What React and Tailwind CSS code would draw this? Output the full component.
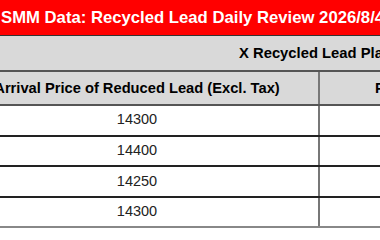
const rows = ['14300', '14400', '14250', '14300'];

export default function App() {
  return (
    <div className="w-[380px] h-[240px] overflow-hidden bg-white font-['Liberation_Sans',Arial,sans-serif] text-black">
      <div className="h-[36px] bg-[#ff0000] border-b border-[#333] flex items-center pl-[1px] whitespace-nowrap">
        <span className="text-white font-bold text-[16.7px]">SMM Data: Recycled Lead Daily Review 2026/8/4</span>
      </div>
      <div className="h-[36px] bg-[#d9d9d9] border-b-2 border-[#555] flex items-center pl-[239px] whitespace-nowrap">
        <span className="font-bold text-[14.8px]">X Recycled Lead Plant</span>
      </div>
      <div className="h-[34px] bg-[#d9d9d9] border-b-2 border-[#555] flex ml-[-44px] whitespace-nowrap">
        <div className="w-[364px] shrink-0 flex items-center justify-center border-r-2 border-[#777] font-bold text-[14.7px]">
          Arrival Price of Reduced Lead (Excl. Tax)
        </div>
        <div className="flex items-center pl-[55px] font-bold text-[14.7px]">Price</div>
      </div>
      {rows.map((v, i) => (
        <div
          key={i}
          className={`h-[30.6px] flex ml-[-44px] border-b-2 ${i === rows.length - 1 ? 'border-[#888]' : 'border-[#222]'}`}
        >
          <div className="w-[364px] shrink-0 flex items-center justify-center border-r-2 border-[#777] text-[14.5px] text-[#222]">
            {v}
          </div>
          <div className="flex-1" />
        </div>
      ))}
    </div>
  );
}
